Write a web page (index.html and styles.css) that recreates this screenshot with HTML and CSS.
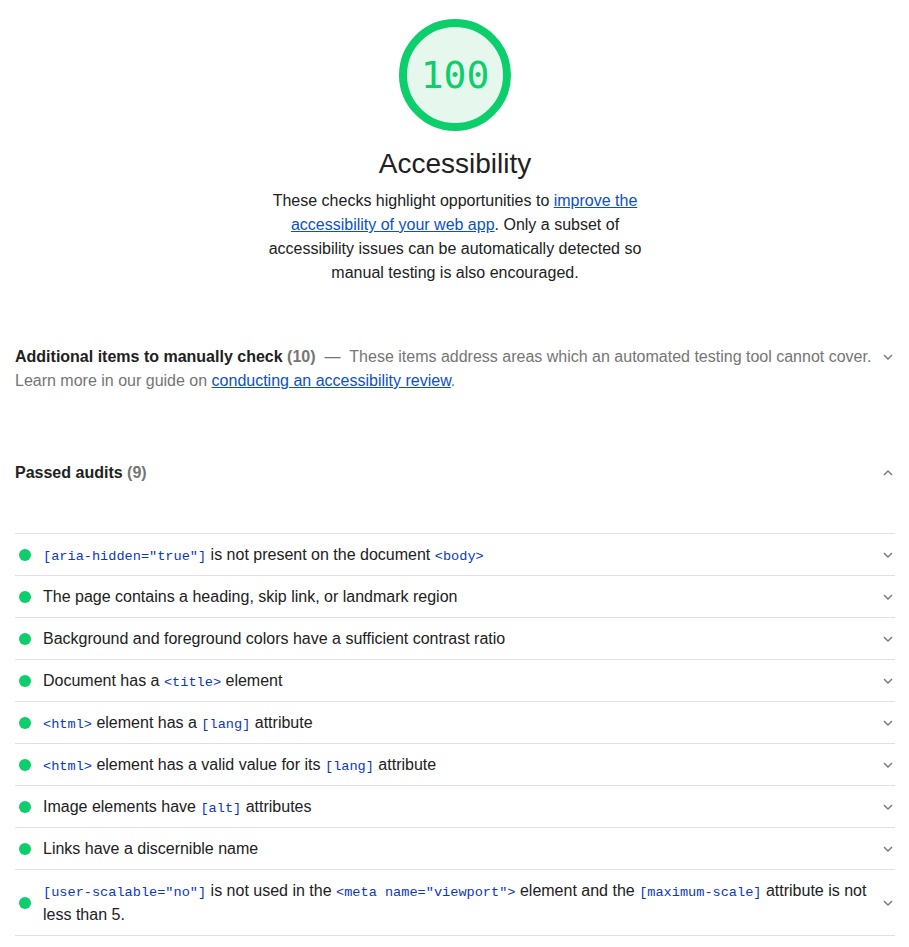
FILE: index.html
```html
<!DOCTYPE html>
<html lang="en">
<head>
<meta charset="utf-8">
<link rel="stylesheet" href="styles.css">
</head>
<body>
<div class="report">
  <header class="cat-header">
    <div class="gauge">
      <svg class="gauge-svg" width="112" height="112" viewBox="0 0 112 112">
        <circle cx="56" cy="56" r="52" fill="#e6f8ee" stroke="#0cce6b" stroke-width="8"/>
      </svg>
      <span class="gauge-score">100</span>
    </div>
    <h1 class="cat-title">Accessibility</h1>
    <p class="cat-desc">These checks highlight opportunities to <a href="#">improve the accessibility of your web app</a>. Only a subset of accessibility issues can be automatically detected so manual testing is also encouraged.</p>
  </header>

  <section class="group manual">
    <div class="group-head">
      <div class="group-text"><span class="group-title">Additional items to manually check</span> <span class="count">(10)</span><span class="group-desc"> &nbsp;— &nbsp;These items address areas which an automated testing tool cannot cover. Learn more in our guide on <a href="#">conducting an accessibility review</a>.</span></div>
      <svg class="chev" width="10" height="6" viewBox="0 0 10 6"><path d="M1 1l4 4 4-4" fill="none" stroke="#757575" stroke-width="1.4"/></svg>
    </div>
  </section>

  <section class="group passed">
    <div class="group-head">
      <div class="group-text"><span class="group-title">Passed audits</span> <span class="count">(9)</span></div>
      <svg class="chev" width="10" height="6" viewBox="0 0 10 6"><path d="M1 5l4-4 4 4" fill="none" stroke="#757575" stroke-width="1.4"/></svg>
    </div>
    <ul class="audits">
      <li class="audit"><span class="dot"></span><span class="audit-text"><code>[aria-hidden="true"]</code> is not present on the document <code>&lt;body&gt;</code></span><svg class="chev" width="10" height="6" viewBox="0 0 10 6"><path d="M1 1l4 4 4-4" fill="none" stroke="#757575" stroke-width="1.4"/></svg></li>
      <li class="audit"><span class="dot"></span><span class="audit-text">The page contains a heading, skip link, or landmark region</span><svg class="chev" width="10" height="6" viewBox="0 0 10 6"><path d="M1 1l4 4 4-4" fill="none" stroke="#757575" stroke-width="1.4"/></svg></li>
      <li class="audit"><span class="dot"></span><span class="audit-text">Background and foreground colors have a sufficient contrast ratio</span><svg class="chev" width="10" height="6" viewBox="0 0 10 6"><path d="M1 1l4 4 4-4" fill="none" stroke="#757575" stroke-width="1.4"/></svg></li>
      <li class="audit"><span class="dot"></span><span class="audit-text">Document has a <code>&lt;title&gt;</code> element</span><svg class="chev" width="10" height="6" viewBox="0 0 10 6"><path d="M1 1l4 4 4-4" fill="none" stroke="#757575" stroke-width="1.4"/></svg></li>
      <li class="audit"><span class="dot"></span><span class="audit-text"><code>&lt;html&gt;</code> element has a <code>[lang]</code> attribute</span><svg class="chev" width="10" height="6" viewBox="0 0 10 6"><path d="M1 1l4 4 4-4" fill="none" stroke="#757575" stroke-width="1.4"/></svg></li>
      <li class="audit"><span class="dot"></span><span class="audit-text"><code>&lt;html&gt;</code> element has a valid value for its <code>[lang]</code> attribute</span><svg class="chev" width="10" height="6" viewBox="0 0 10 6"><path d="M1 1l4 4 4-4" fill="none" stroke="#757575" stroke-width="1.4"/></svg></li>
      <li class="audit"><span class="dot"></span><span class="audit-text">Image elements have <code>[alt]</code> attributes</span><svg class="chev" width="10" height="6" viewBox="0 0 10 6"><path d="M1 1l4 4 4-4" fill="none" stroke="#757575" stroke-width="1.4"/></svg></li>
      <li class="audit"><span class="dot"></span><span class="audit-text">Links have a discernible name</span><svg class="chev" width="10" height="6" viewBox="0 0 10 6"><path d="M1 1l4 4 4-4" fill="none" stroke="#757575" stroke-width="1.4"/></svg></li>
      <li class="audit"><span class="dot"></span><span class="audit-text"><code>[user-scalable="no"]</code> is not used in the <code>&lt;meta name="viewport"&gt;</code> element and the <code>[maximum-scale]</code> attribute is not less than 5.</span><svg class="chev" width="10" height="6" viewBox="0 0 10 6"><path d="M1 1l4 4 4-4" fill="none" stroke="#757575" stroke-width="1.4"/></svg></li>
    </ul>
  </section>
</div>
</body>
</html>
```

FILE: styles.css
```css
html, body {
  margin: 0;
  padding: 0;
  background: #fff;
}
body {
  font-family: "Liberation Sans", Arial, sans-serif;
  font-size: 16px;
  line-height: 24px;
  color: #212121;
}
a {
  color: #0c50c7;
  text-decoration: underline;
}
code {
  font-family: "Liberation Mono", "Courier New", monospace;
  font-size: 13.6px;
  line-height: 1;
  color: #0938c2;
}
.report {
  padding: 0 14px 0 15px;
}
.cat-header {
  display: flex;
  flex-direction: column;
  align-items: center;
  padding-top: 19px;
}
.gauge {
  position: relative;
  width: 112px;
  height: 112px;
}
.gauge-svg {
  display: block;
}
.gauge-score {
  position: absolute;
  inset: 0;
  display: flex;
  align-items: center;
  justify-content: center;
  font-family: "DejaVu Sans Mono", monospace;
  font-size: 38px;
  color: #0cce6b;
}
.cat-title {
  margin: 15px 0 0;
  font-size: 28px;
  line-height: 36px;
  font-weight: 400;
  color: #212121;
}
.cat-desc {
  margin: 7px 0 0;
  max-width: 400px;
  text-align: center;
}
.group {
  margin: 0;
}
.manual {
  margin-top: 60px;
}
.passed {
  margin-top: 68px;
}
.group-head {
  display: flex;
  align-items: flex-start;
  justify-content: space-between;
  gap: 4px;
}
.group-text {
  flex: 1;
}
.group-title {
  font-weight: 700;
}
.count {
  color: #757575;
  font-weight: 700;
}
.group-desc {
  color: #757575;
}
.group-head .chev {
  margin-top: 9px;
  margin-right: 2px;
  flex: none;
}
.audits {
  list-style: none;
  margin: 48px 0 0;
  padding: 0;
  border-top: 1px solid #e0e0e0;
}
.audit {
  display: flex;
  align-items: center;
  padding: 9px 2px 8px 4px;
  border-bottom: 1px solid #e0e0e0;
}
.dot {
  flex: none;
  width: 12px;
  height: 12px;
  border-radius: 50%;
  background: #0cce6b;
  margin-right: 12px;
}
.audit-text {
  flex: 1;
  padding-right: 10px;
}
.audit .chev {
  flex: none;
}
```
